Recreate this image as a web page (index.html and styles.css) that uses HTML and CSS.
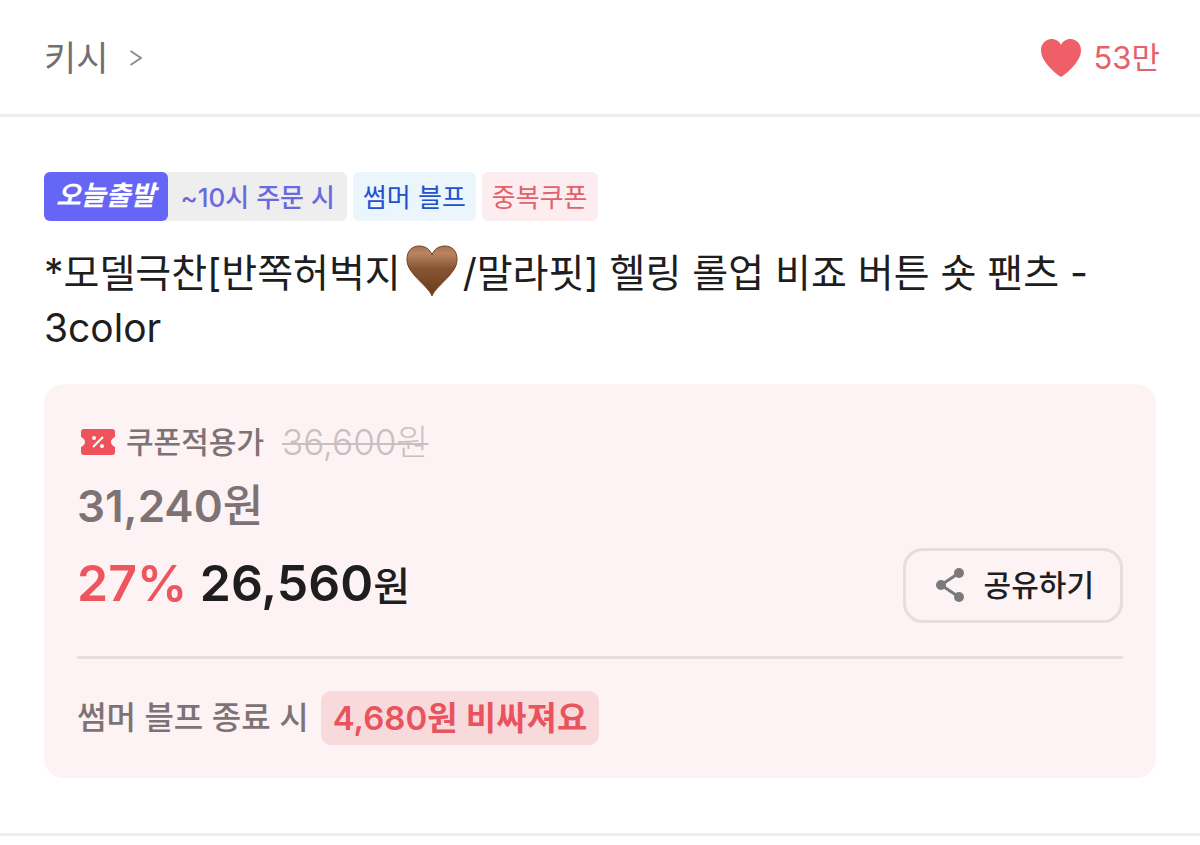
FILE: index.html
```
<!DOCTYPE html>
<html lang="ko">
<head>
  <meta charset="UTF-8">
  <meta name="viewport" content="width=device-width, initial-scale=1.0">
  <title>키시 - 헬링 롤업 비죠 버튼 숏 팬츠</title>
  <link rel="stylesheet" href="styles.css">
</head>
<body>

  <!-- Shop header -->
  <header class="shop-header">
    <a href="#" class="shop-link">
      키시
      <svg class="arrow" viewBox="0 0 12 16" aria-hidden="true">
        <path d="M0.5 1 L11 8 L0.5 15"/>
      </svg>
    </a>
    <button class="like-btn" aria-label="찜 53만">
      <svg class="heart" viewBox="0 0 40 38" aria-hidden="true">
        <path d="M20 38 C18 37 9 30 5 24 C1.500 19 0 16 0 11 C0 5 4.500 0 10.500 0 C15 0 18.500 2.500 20 6 C21.500 2.500 25 0 29.500 0 C35.500 0 40 5 40 11 C40 16 38.500 19 35 24 C31 30 22 37 20 38 Z"/>
      </svg>
      <span>53만</span>
    </button>
  </header>

  <main class="product">
    <!-- Tags -->
    <div class="tags">
      <div class="delivery">
        <strong class="today">오늘출발</strong>
        <span class="until">~10시 주문 시</span>
      </div>
      <span class="tag blue">썸머 블프</span>
      <span class="tag pink">중복쿠폰</span>
    </div>

    <h1 class="title">*모델극찬[반쪽허벅지<svg class="brown-heart" viewBox="0 0 52 52" role="img" aria-label="갈색 하트">
        <defs>
          <linearGradient id="brown" x1="0" y1="0" x2="0" y2="1">
            <stop offset="0" stop-color="#a8724c"/>
            <stop offset="0.15" stop-color="#b98561"/>
            <stop offset="0.45" stop-color="#885534"/>
            <stop offset="1" stop-color="#683b19"/>
          </linearGradient>
        </defs>
        <path d="M26 51 C24 45 15 38 9 31 C3 24 1 20 1 14 C1 6 6 1 13 1 C19 1 24 4 26 10 C28 4 33 1 39 1 C46 1 51 6 51 14 C51 20 49 24 43 31 C37 38 28 45 26 51 Z" fill="url(#brown)" stroke="#734321" stroke-width="1"/>
      </svg>/말라핏] 헬링 롤업 비죠 버튼 숏 팬츠 - 3color</h1>

    <!-- Price box -->
    <section class="price-box">
      <div class="coupon-row">
        <svg class="coupon" viewBox="0 0 34 26" aria-hidden="true">
          <path class="ticket" d="M3 0 H31 Q34 0 34 3 V8 Q30 10 30 13 Q30 16 34 18 V23 Q34 26 31 26 H3 Q0 26 0 23 V18 Q4 16 4 13 Q4 10 0 8 V3 Q0 0 3 0 Z"/>
          <path class="percent" d="M12 18 L22 8"/>
          <circle cx="13" cy="9" r="2"/>
          <circle cx="21" cy="17" r="2"/>
        </svg>
        <span class="coupon-label">쿠폰적용가</span>
        <del class="origin-price">36,600원</del>
      </div>
      <p class="sale-price">31,240<span class="unit">원</span></p>
      <div class="final-row">
        <p class="final-price"><span class="rate">27%</span> 26,560<span class="unit won">원</span></p>
        <button class="share-btn">
          <svg class="share" viewBox="0 0 28 34" aria-hidden="true">
            <path d="M23 5 L5 17 L23 29"/>
            <circle cx="23" cy="5" r="5"/>
            <circle cx="5" cy="17" r="5"/>
            <circle cx="23" cy="29" r="5"/>
          </svg>
          공유하기
        </button>
      </div>
      <div class="notice">
        <span>썸머 블프 종료 시</span>
        <strong class="notice-badge">4,680원 비싸져요</strong>
      </div>
    </section>
  </main>

</body>
</html>
```
FILE: styles.css
```
/* Global Styles */
* {
  box-sizing: border-box;
}

body {
  margin: 0;
  background: #fff;
  color: #1e1e1e;
  font-family: Inter, "Noto Sans CJK KR", sans-serif;
}

h1, p {
  margin: 0;
}

button {
  font-family: inherit;
  cursor: pointer;
}

/* Shop header */
.shop-header {
  display: flex;
  justify-content: space-between;
  align-items: center;
  padding: 34px 40px 32px 44px;
  border-bottom: 3px solid #ededed;
}

.shop-link {
  display: flex;
  align-items: center;
  gap: 22px;
  color: #707070;
  font-size: 35px;
  line-height: 48px;
  text-decoration: none;
}

.arrow {
  width: 12px;
  height: 16px;
  fill: none;
  stroke: #8c8c8c;
  stroke-width: 2;
}

.like-btn {
  display: flex;
  align-items: center;
  gap: 12px;
  padding: 0;
  border: none;
  background: none;
  color: #e6626a;
  font-size: 31px;
  line-height: 44px;
}

.heart {
  width: 40px;
  height: 38px;
  fill: #ee5f68;
}

/* Product */
.product {
  padding: 55px 44px;
  border-bottom: 3px solid #eee;
}

.tags {
  display: flex;
  gap: 6px;
  font-size: 26px;
  line-height: 47px;
}

.delivery {
  display: flex;
  border-radius: 6px;
  background: #eee;
}

.today {
  padding: 0 13px 2px 12px;
  border-radius: 6px;
  background: #6666f6;
  color: #fff;
  font-style: italic;
  font-weight: 700;
  font-size: 27px;
}

.until {
  padding: 2px 12px 0;
  color: #6a6ae0;
  font-weight: 500;
}

.tag {
  padding: 2px 10px 0;
  border-radius: 6px;
}

.blue {
  background: #ebf5fc;
  color: #2450ce;
}

.pink {
  background: #fdedf0;
  color: #e0626c;
}

.title {
  margin-top: 24px;
  font-size: 39px;
  font-weight: 400;
  line-height: 55px;
}

.brown-heart {
  width: 52px;
  height: 52px;
  margin: -2px 5px;
  vertical-align: -8px;
}

/* Price box */
.price-box {
  margin-top: 29px;
  padding: 34px 33px 33px;
  border-radius: 20px;
  background: #fdf2f4;
}

.coupon-row {
  display: flex;
  align-items: center;
  padding-left: 4px;
  line-height: 48px;
}

.coupon {
  width: 34px;
  height: 26px;
  fill: #fff;
}

.ticket {
  fill: #f0525b;
}

.percent {
  stroke: #fff;
  stroke-width: 2;
}

.coupon-label {
  margin-left: 11px;
  color: #7d7375;
  font-size: 30px;
  font-weight: 500;
}

.origin-price {
  margin-left: 18px;
  color: #c9bfc1;
  font-size: 35px;
  font-weight: 300;
  text-decoration-thickness: 2px;
}

.sale-price {
  color: #7d7375;
  font-size: 44px;
  font-weight: 600;
  line-height: 80px;
}

.final-row {
  display: flex;
  justify-content: space-between;
  align-items: center;
  padding-bottom: 32px;
  border-bottom: 3px solid #e8dcdf;
}

.final-price {
  font-size: 50px;
  font-weight: 600;
  line-height: 75px;
}

.rate {
  color: #ee555f;
}

.unit {
  font-weight: 500;
}

.won {
  font-size: 40px;
}

.share-btn {
  display: flex;
  align-items: center;
  gap: 20px;
  padding: 0 26px 0 30px;
  border: 3px solid #e8dcdf;
  border-radius: 20px;
  background: none;
  color: #1e1e1e;
  font-size: 30px;
  font-weight: 500;
  line-height: 69px;
}

.share {
  width: 28px;
  height: 34px;
  fill: #7a7a7a;
}

.share path {
  fill: none;
  stroke: #7a7a7a;
  stroke-width: 3;
}

.notice {
  display: flex;
  align-items: center;
  gap: 12px;
  margin-top: 32px;
  color: #7d7375;
  font-size: 32px;
  font-weight: 500;
  line-height: 54px;
}

.notice-badge {
  padding: 0 12px;
  border-radius: 10px;
  background: #f8d9dc;
  color: #e8545d;
  font-size: 33px;
  font-weight: 600;
}
```
